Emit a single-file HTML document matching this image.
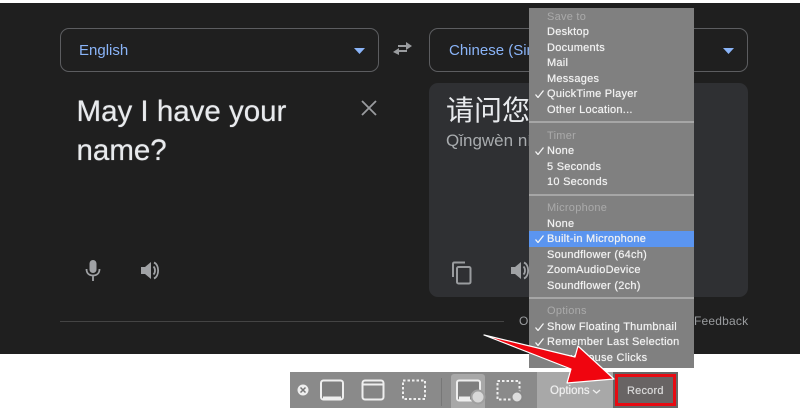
<!DOCTYPE html>
<html><head><meta charset="utf-8"><style>
*{box-sizing:border-box}
html,body{margin:0;padding:0;width:800px;height:408px;overflow:hidden;background:#fff;font-family:"Liberation Sans","Noto Sans CJK SC",sans-serif}
.a{position:absolute;white-space:nowrap}
#dark{left:0;top:3px;width:800px;height:351px;background:#1f1f1f}
.sel{border:1px solid #5c5d60;border-radius:9px;height:44px;top:28px;background:#1f1f1f}
.blue{color:#8ab4f8;font-size:15px}
#menu{left:529px;top:8px;width:165px;height:360px;background:#808080}
.m{left:18px;font-size:11px;letter-spacing:.26px;color:#f2f2f2;line-height:14px;text-shadow:0 0 .6px #f2f2f2}
.h{color:#aaa;text-shadow:none}
.sep{left:0;width:165px;height:2px;background:#a6a6a6}
.c{left:6px;width:9px;height:8px;fill:none;stroke:#f5f5f5;stroke-width:1.300}
</style></head><body>
<div class="a" id="dark"></div>
<div class="a sel" style="left:60px;width:319px"></div>
<div class="a blue" style="left:79px;top:42px">English</div>
<svg class="a" style="left:354px;top:48px" width="12" height="6"><path d="M0 0H11L5.500 6Z" fill="#8ab4f8"/></svg>
<svg class="a" style="left:392px;top:41px" width="21" height="16" fill="#9a9c9f" stroke="none"><path d="M6 4H14V1L20 5L14 9V6H6ZM15 9V11H7V14L1 11L7 7V9Z" /></svg>
<div class="a sel" style="left:429px;width:319px"></div>
<div class="a blue" style="left:449px;top:42px">Chinese (Simplified)</div>
<svg class="a" style="left:723px;top:48px" width="12" height="6"><path d="M0 0H11L5.500 6Z" fill="#8ab4f8"/></svg>
<div class="a" style="left:76.500px;top:93px;font-size:29.500px;line-height:38.500px;color:#e8eaed;white-space:normal;width:270px;text-shadow:0 0 .7px #e8eaed">May I have your name?</div>
<svg class="a" style="left:360px;top:99px" width="18" height="18" stroke="#9a9c9f" stroke-width="1.800"><path d="M2 2L16 16M16 2L2 16"/></svg>
<svg class="a" style="left:83px;top:259px" width="20" height="24" fill="none"><rect x="6.500" y="1" width="7" height="13" rx="3.500" fill="#a0a2a5"/><path d="M3.500 10C3.500 14 6 16.500 10 16.500S16.500 14 16.500 10M10 16V22" stroke="#a0a2a5" stroke-width="1.800"/></svg>
<svg class="a" style="left:140px;top:260px" width="22" height="21" fill="none"><path d="M1 7H5L11 2V19L5 14H1Z" fill="#a0a2a5"/><path d="M13.500 6.500C15.500 8.500 15.500 12.500 13.500 14.500M14 2.500C19.500 5 19.500 16 14 18.500" stroke="#a0a2a5" stroke-width="1.800"/></svg>
<div class="a" style="left:429px;top:83px;width:319px;height:214px;background:#2f3033;border-radius:9px"></div>
<div class="a" style="left:446px;top:91px;font-size:28px;line-height:40px;color:#e8eaed">请问您</div>
<div class="a" style="left:446px;top:131px;font-size:17px;color:#a8abae">Qǐngwèn nín</div>
<svg class="a" style="left:451px;top:261px" width="22" height="24" fill="none" stroke="#9a9c9f" stroke-width="2"><path d="M2 16V3C2 2 2.500 1.500 3.500 1.500H14"/><rect x="6" y="6" width="13.500" height="16.500" rx="1.500"/></svg>
<svg class="a" style="left:510px;top:260px" width="22" height="21" fill="none"><path d="M1 7H5L11 2V19L5 14H1Z" fill="#a0a2a5"/><path d="M13.500 6.500C15.500 8.500 15.500 12.500 13.500 14.500M14 2.500C19.500 5 19.500 16 14 18.500" stroke="#a0a2a5" stroke-width="1.800"/></svg>
<div class="a" style="left:60px;top:321px;width:444px;height:1px;background:#444"></div>
<div class="a" style="left:519px;top:314px;font-size:12px;color:#9a9c9f">O</div>
<div class="a" style="left:694px;top:314px;font-size:12px;letter-spacing:.2px;color:#9a9c9f">Feedback</div>

<div class="a" style="left:290px;top:372px;width:388px;height:36px;background:#8a8a8a"></div>
<div class="a" style="left:537px;top:372px;width:76px;height:36px;background:#a8a8a8"></div>
<div class="a" style="left:613px;top:372px;width:65px;height:36px;background:#666"></div>
<div class="a" style="left:451px;top:374px;width:34px;height:34px;background:#a8a8a8;border-radius:3px 3px 0 0"></div>
<div class="a" style="left:441px;top:378px;width:1px;height:28px;background:#777"></div>
<svg class="a" style="left:290px;top:372px;filter:blur(.35px)" width="240" height="36" fill="none" stroke="#eee" stroke-width="2">
<circle cx="13" cy="18" r="5.500" fill="#eee" stroke="none"/><path d="M10.500 15.500L15.500 20.500M15.500 15.500L10.500 20.500" stroke="#777" stroke-width="1.500"/>
<rect x="31" y="8.500" width="22" height="19" rx="2.500" fill="#7f7f7f"/><path d="M33 26H51" stroke-width="3"/>
<rect x="72.500" y="8.500" width="21" height="19" rx="2.500" fill="#858585"/><path d="M72 12.500H93" stroke-width="2"/>
<rect x="113" y="8.500" width="22" height="18.500" stroke-dasharray="2.500 2"/>
<rect x="167" y="8.500" width="23" height="20" rx="2" fill="#7f7f7f"/><path d="M169 26H180" stroke-width="3"/><circle cx="188" cy="25" r="6.500" fill="#d8d8d8" stroke="#a0a0a0"/>
<rect x="207.500" y="9" width="22" height="18.500" stroke-dasharray="2.500 2"/><circle cx="227" cy="25" r="5.500" fill="#ddd" stroke="#888" stroke-width="2"/>
</svg>
<div class="a" style="left:550px;top:385px;font-size:11.500px;color:#eee;text-shadow:0 0 .6px #eee">Options</div>
<svg class="a" style="left:592px;top:389px" width="9" height="5" fill="none" stroke="#eee" stroke-width="1.300"><path d="M1 1L4.500 4L8 1"/></svg>
<div class="a" style="left:615px;top:374px;width:61px;height:32px;border:3px solid #e60b12;background:#686464"></div>
<div class="a" style="left:627px;top:385px;font-size:11px;letter-spacing:.2px;color:#d8d8d8;text-shadow:0 0 .5px #d8d8d8">Record</div>

<div class="a" id="menu">
<div class="a m h" style="top:1.500px">Save to</div>
<div class="a m" style="top:17px">Desktop</div>
<div class="a m" style="top:32.500px">Documents</div>
<div class="a m" style="top:48px">Mail</div>
<div class="a m" style="top:63.500px">Messages</div>
<svg class="a c" style="top:82px" viewBox="0 0 9 8"><path d="M.5 4.500L3 7.500L8.500 .5"/></svg><div class="a m" style="top:79px">QuickTime Player</div>
<div class="a m" style="top:94.500px">Other Location...</div>
<div class="a sep" style="top:113px"></div>
<div class="a m h" style="top:120.500px">Timer</div>
<svg class="a c" style="top:139px" viewBox="0 0 9 8"><path d="M.5 4.500L3 7.500L8.500 .5"/></svg><div class="a m" style="top:135.500px">None</div>
<div class="a m" style="top:151.500px">5 Seconds</div>
<div class="a m" style="top:166.500px">10 Seconds</div>
<div class="a sep" style="top:186px"></div>
<div class="a m h" style="top:192.500px">Microphone</div>
<div class="a m" style="top:208.500px">None</div>
<div class="a" style="left:0;top:223px;width:165px;height:15.500px;background:#5b95f0"></div>
<svg class="a c" style="top:227px" viewBox="0 0 9 8"><path d="M.5 4.500L3 7.500L8.500 .5"/></svg><div class="a m" style="top:223.500px">Built-in Microphone</div>
<div class="a m" style="top:239.500px">Soundflower (64ch)</div>
<div class="a m" style="top:254.500px">ZoomAudioDevice</div>
<div class="a m" style="top:270.500px">Soundflower (2ch)</div>
<div class="a sep" style="top:289px"></div>
<div class="a m h" style="top:295.500px">Options</div>
<svg class="a c" style="top:315px" viewBox="0 0 9 8"><path d="M.5 4.500L3 7.500L8.500 .5"/></svg><div class="a m" style="top:311.500px">Show Floating Thumbnail</div>
<svg class="a c" style="top:330px" viewBox="0 0 9 8"><path d="M.5 4.500L3 7.500L8.500 .5"/></svg><div class="a m" style="top:326.500px">Remember Last Selection</div>
<div class="a m" style="top:342.500px">Show Mouse Clicks</div>
</div>
<svg class="a" style="left:0;top:0" width="800" height="408"><path d="M484 335L575 357L578 346L614 379L567 383L571 369Z" fill="#f0050f" stroke="#fff" stroke-width="1.200" stroke-linejoin="round"/></svg>
</body></html>
